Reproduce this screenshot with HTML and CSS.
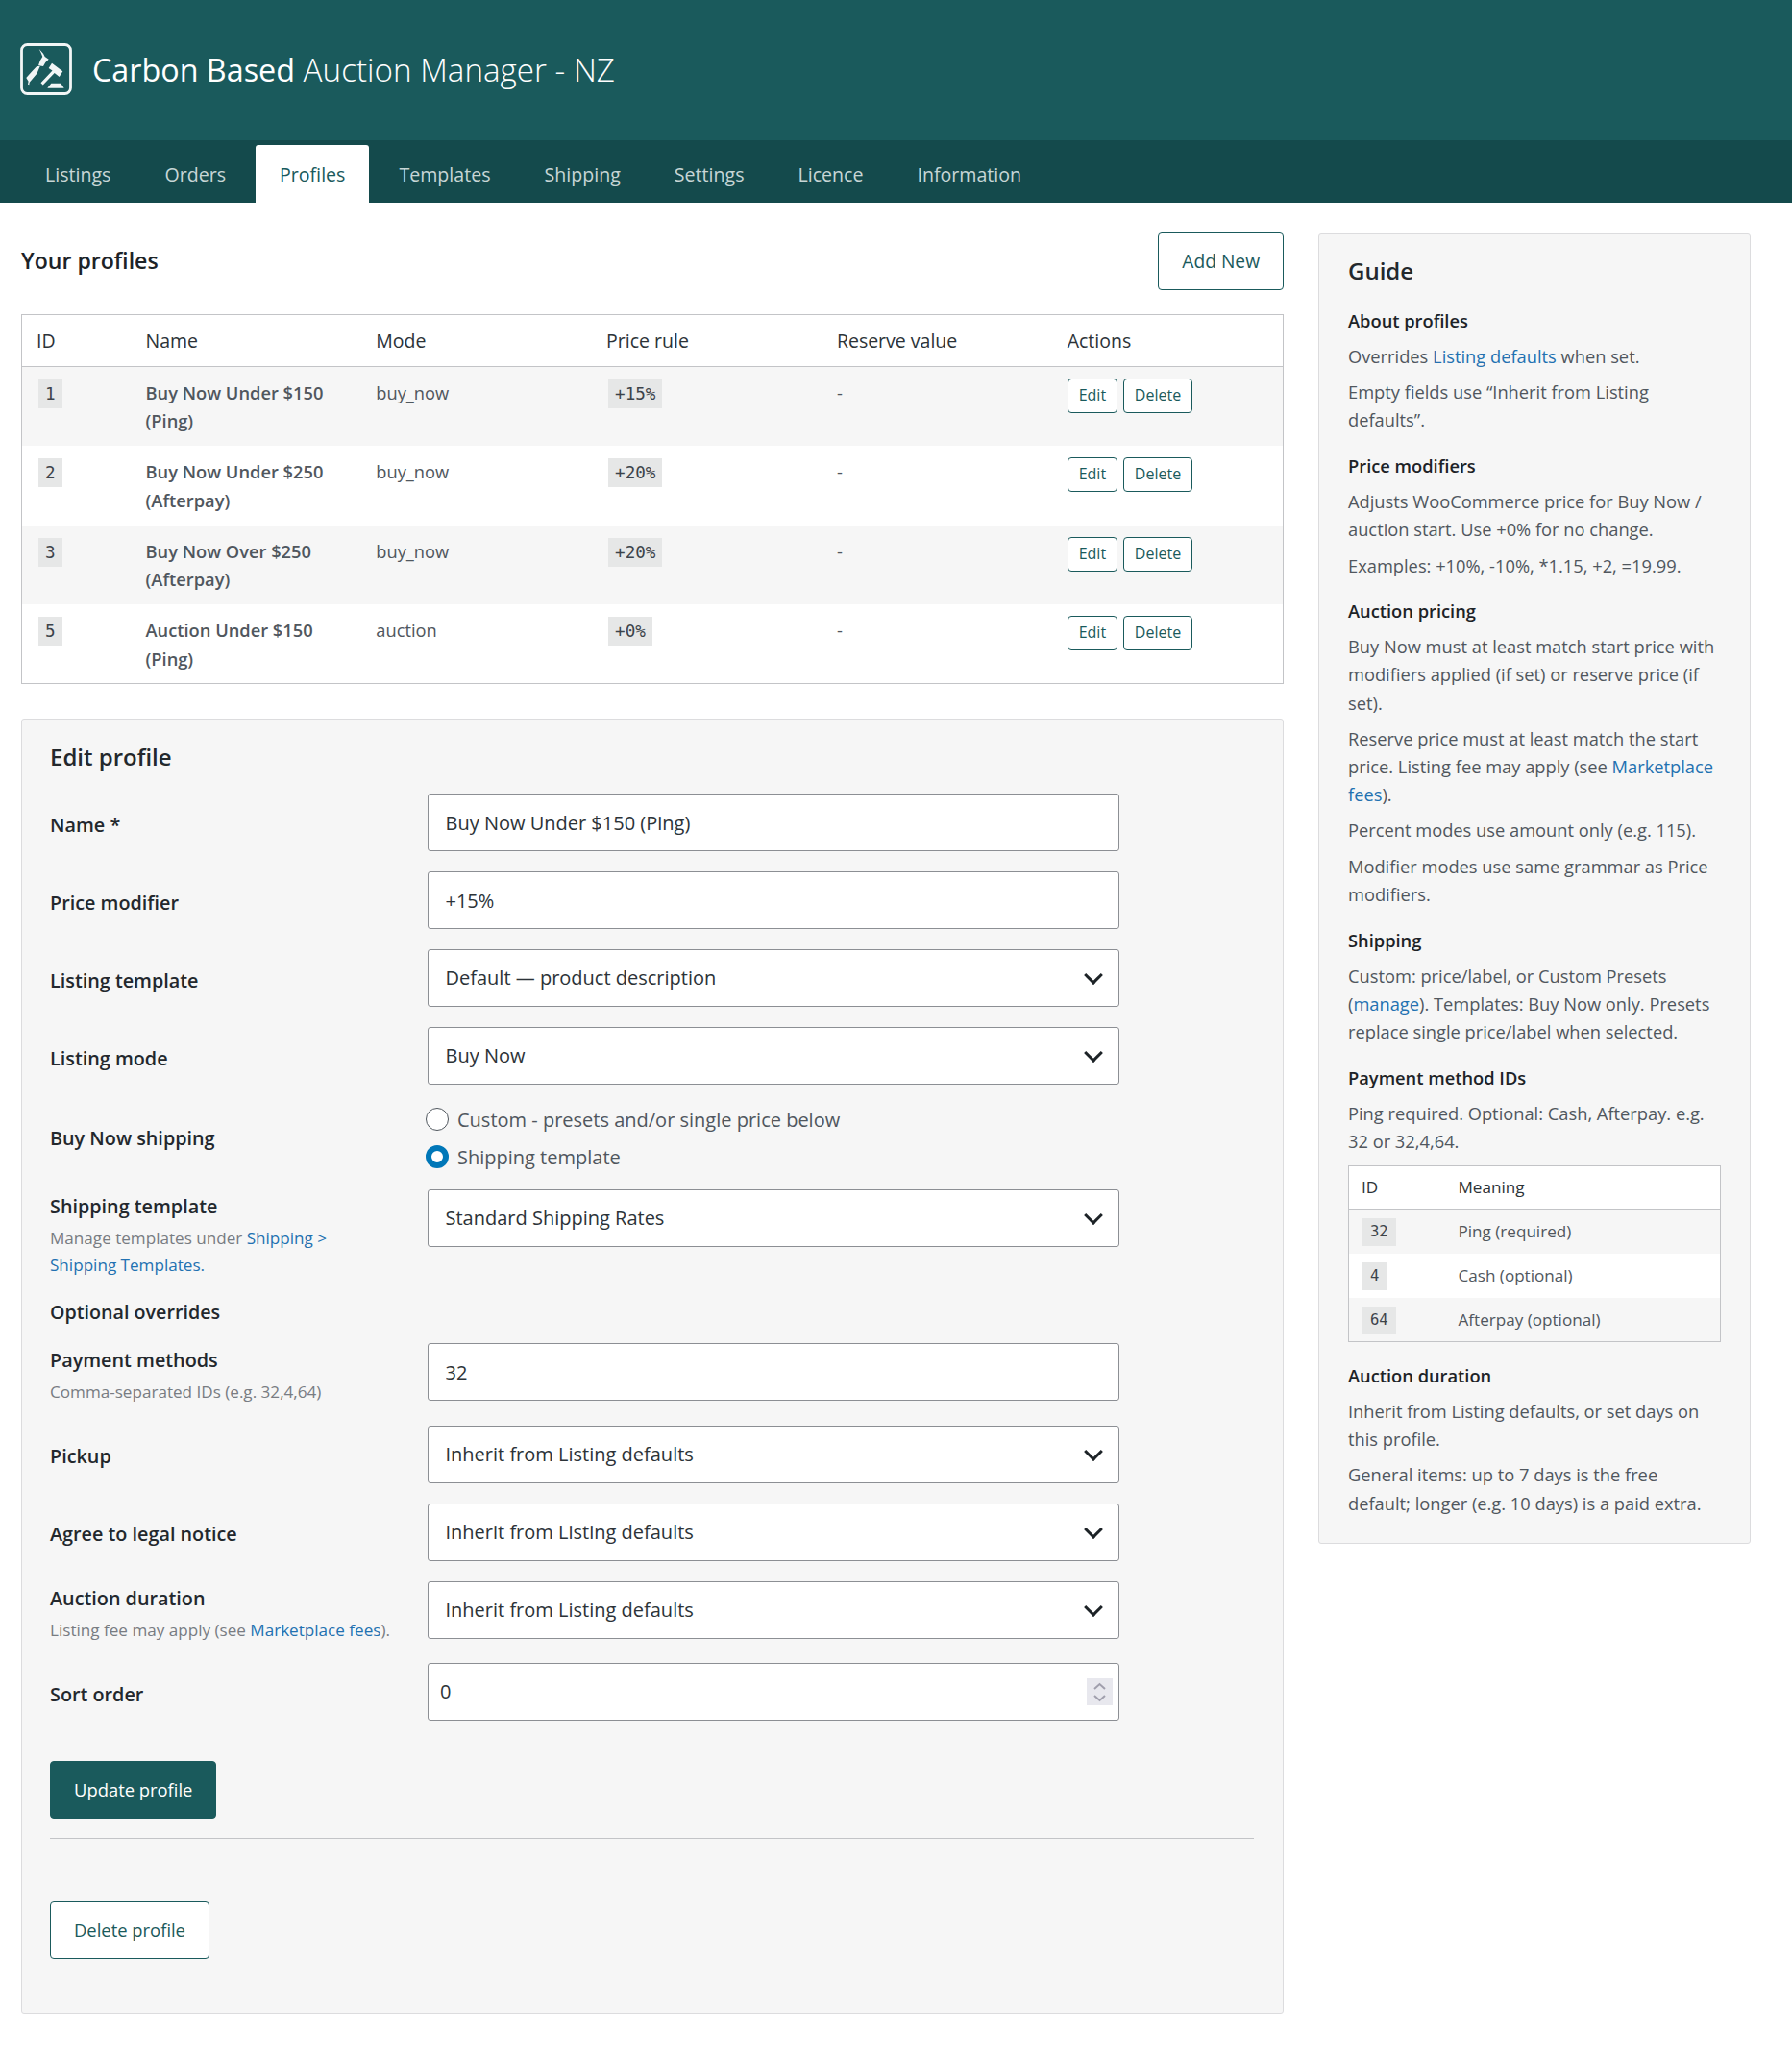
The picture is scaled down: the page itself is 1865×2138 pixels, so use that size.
FILE: index.html

```html
<!DOCTYPE html>
<html lang="en">
<head>
  <meta charset="UTF-8">
  <meta name="viewport" content="width=device-width, initial-scale=1.0">
  <title>Carbon Based Auction Manager - NZ</title>
  <link rel="stylesheet" href="styles.css">
</head>
<body>
  <header class="app-header">
    <svg class="logo" viewBox="0 0 56 56" aria-hidden="true">
      <rect x="2.500" y="2.500" width="51" height="51" rx="6" fill="none" stroke="#f2f6f6" stroke-width="2.800"/>
      <path d="M20.700 7l4.300 4.700 1.700 3.300 4 2.700-3.400 3.300-2.300 4-5-.7 1.700-5 2.600-4.300-1.600-4z" fill="#f2f6f6"/>
      <path d="M21.700 25l-3.400 7.700-7.600 9-.4 2.500-1.300-.4.600-3-2.300-3.800 6-6.700 5-5.300z" fill="#f2f6f6"/>
      <path d="M34 21.700l11.300 8.600-3.600 5.700-5-4-12 12.400-2.200-2.200 12-12.600-3.800-2.600z" fill="#f2f6f6"/>
      <path d="M33.300 42.700h10l3.400 5H29.300z" fill="#f2f6f6"/>
    </svg>
    <h1 class="app-title"><strong>Carbon Based</strong> Auction Manager - NZ</h1>
  </header>

  <nav class="tabs">
    <a href="#">Listings</a>
    <a href="#">Orders</a>
    <a href="#" class="active">Profiles</a>
    <a href="#">Templates</a>
    <a href="#">Shipping</a>
    <a href="#">Settings</a>
    <a href="#">Licence</a>
    <a href="#">Information</a>
  </nav>

  <div class="layout">
    <main class="main-col">
      <div class="list-head">
        <h2>Your profiles</h2>
        <a href="#" class="btn btn-add">Add New</a>
      </div>

      <table class="data-table profiles">
        <thead>
          <tr><th>ID</th><th>Name</th><th>Mode</th><th>Price rule</th><th>Reserve value</th><th>Actions</th></tr>
        </thead>
        <tbody>
          <tr>
            <td><code>1</code></td>
            <td class="name">Buy Now Under $150 (Ping)</td>
            <td>buy_now</td>
            <td><code>+15%</code></td>
            <td>-</td>
            <td><a href="#" class="btn-small">Edit</a> <a href="#" class="btn-small">Delete</a></td>
          </tr>
          <tr>
            <td><code>2</code></td>
            <td class="name">Buy Now Under $250 (Afterpay)</td>
            <td>buy_now</td>
            <td><code>+20%</code></td>
            <td>-</td>
            <td><a href="#" class="btn-small">Edit</a> <a href="#" class="btn-small">Delete</a></td>
          </tr>
          <tr>
            <td><code>3</code></td>
            <td class="name">Buy Now Over $250 (Afterpay)</td>
            <td>buy_now</td>
            <td><code>+20%</code></td>
            <td>-</td>
            <td><a href="#" class="btn-small">Edit</a> <a href="#" class="btn-small">Delete</a></td>
          </tr>
          <tr>
            <td><code>5</code></td>
            <td class="name">Auction Under $150 (Ping)</td>
            <td>auction</td>
            <td><code>+0%</code></td>
            <td>-</td>
            <td><a href="#" class="btn-small">Edit</a> <a href="#" class="btn-small">Delete</a></td>
          </tr>
        </tbody>
      </table>

      <form class="card edit-card">
        <h2>Edit profile</h2>

        <div class="field">
          <label>Name *</label>
          <input class="control" type="text" value="Buy Now Under $150 (Ping)">
        </div>
        <div class="field">
          <label>Price modifier</label>
          <input class="control" type="text" value="+15%">
        </div>
        <div class="field">
          <label>Listing template</label>
          <div class="control select">Default — product description</div>
        </div>
        <div class="field">
          <label>Listing mode</label>
          <div class="control select">Buy Now</div>
        </div>
        <div class="field radios-field">
          <label>Buy Now shipping</label>
          <div class="radios">
            <div class="radio-line"><span class="radio"></span>Custom - presets and/or single price below</div>
            <div class="radio-line"><span class="radio checked"></span>Shipping template</div>
          </div>
        </div>
        <div class="field top">
          <div>
            <label>Shipping template</label>
            <p class="help">Manage templates under <a href="#">Shipping &gt;<br>Shipping Templates.</a></p>
          </div>
          <div class="control select">Standard Shipping Rates</div>
        </div>

        <h3 class="sub-head">Optional overrides</h3>

        <div class="field top">
          <div>
            <label>Payment methods</label>
            <p class="help">Comma-separated IDs (e.g. 32,4,64)</p>
          </div>
          <input class="control" type="text" value="32">
        </div>
        <div class="field">
          <label>Pickup</label>
          <div class="control select">Inherit from Listing defaults</div>
        </div>
        <div class="field">
          <label>Agree to legal notice</label>
          <div class="control select">Inherit from Listing defaults</div>
        </div>
        <div class="field top">
          <div>
            <label>Auction duration</label>
            <p class="help">Listing fee may apply (see <a href="#">Marketplace fees</a>).</p>
          </div>
          <div class="control select">Inherit from Listing defaults</div>
        </div>
        <div class="field">
          <label>Sort order</label>
          <div class="control number">0
            <span class="spinner">
              <svg viewBox="0 0 27 28" width="27" height="28"><path d="M8 11l5.500-5 5.500 5M8 18l5.500 5 5.500-5" fill="none" stroke="#a09fad" stroke-width="2"/></svg>
            </span>
          </div>
        </div>

        <div class="form-actions">
          <a href="#" class="btn btn-primary">Update profile</a>
        </div>
        <div class="form-danger">
          <a href="#" class="btn">Delete profile</a>
        </div>
      </form>
    </main>

    <aside class="card guide">
      <h2>Guide</h2>

      <h4>About profiles</h4>
      <p>Overrides <a href="#">Listing defaults</a> when set.</p>
      <p>Empty fields use “Inherit from Listing defaults”.</p>

      <h4>Price modifiers</h4>
      <p>Adjusts WooCommerce price for Buy Now / auction start. Use +0% for no change.</p>
      <p>Examples: +10%, -10%, *1.15, +2, =19.99.</p>

      <h4>Auction pricing</h4>
      <p>Buy Now must at least match start price with modifiers applied (if set) or reserve price (if set).</p>
      <p>Reserve price must at least match the start price. Listing fee may apply (see <a href="#">Marketplace fees</a>).</p>
      <p>Percent modes use amount only (e.g. 115).</p>
      <p>Modifier modes use same grammar as Price modifiers.</p>

      <h4>Shipping</h4>
      <p>Custom: price/label, or Custom Presets (<a href="#">manage</a>). Templates: Buy Now only. Presets replace single price/label when selected.</p>

      <h4>Payment method IDs</h4>
      <p>Ping required. Optional: Cash, Afterpay. e.g. 32 or 32,4,64.</p>

      <table class="data-table ids">
        <thead><tr><th>ID</th><th>Meaning</th></tr></thead>
        <tbody>
          <tr><td><code>32</code></td><td>Ping (required)</td></tr>
          <tr><td><code>4</code></td><td>Cash (optional)</td></tr>
          <tr><td><code>64</code></td><td>Afterpay (optional)</td></tr>
        </tbody>
      </table>

      <h4>Auction duration</h4>
      <p>Inherit from Listing defaults, or set days on this profile.</p>
      <p>General items: up to 7 days is the free default; longer (e.g. 10 days) is a paid extra.</p>
    </aside>
  </div>
</body>
</html>
```

FILE: styles.css

```css
* {
  box-sizing: border-box;
}
body {
  margin: 0;
  background: #fff;
  color: #3c434a;
  font-family: "Open Sans", "Noto Sans", sans-serif;
  font-size: 18.3px;
  line-height: 29.4px;
}
a {
  color: #2271b1;
  text-decoration: none;
}

/* header + tabs */
.app-header {
  height: 146px;
  background: #1a5a5c;
  display: flex;
  align-items: center;
  padding-left: 20px;
  gap: 20px;
}
.logo {
  width: 56px;
  height: 56px;
  margin-top: -3px;
}
.app-title {
  margin: 0;
  color: #fff;
  font-size: 33.200px;
  font-weight: 300;
  line-height: 1;
}
.app-title strong {
  font-size: 32.300px;
  font-weight: 500;
}
.tabs {
  height: 65px;
  background: #144a4c;
  display: flex;
  align-items: flex-end;
  padding-left: 22px;
}
.tabs a {
  height: 60px;
  padding: 0 25px;
  margin-right: 6px;
  line-height: 62px;
  font-size: 19.6px;
  color: #c7d6d6;
  border-radius: 3px 3px 0 0;
}
.tabs a.active {
  background: #fff;
  color: #1a5a5c;
}

/* page columns */
.layout {
  display: grid;
  grid-template-columns: 1314px 450px;
  gap: 36px;
  padding: 31px 0 0 22px;
}
.main-col {
  min-width: 0;
}
.list-head {
  display: flex;
  justify-content: space-between;
  align-items: center;
  height: 60px;
  margin-bottom: 25px;
}
.list-head h2 {
  margin: 0;
  font-size: 23.100px;
  font-weight: 600;
  color: #1d2327;
}

/* buttons */
.btn {
  display: inline-block;
  height: 60px;
  line-height: 57px;
  padding: 0 24px;
  font-size: 18.4px;
  color: #1a5a5c;
  background: #fff;
  border: 1.5px solid #1a5a5c;
  border-radius: 4px;
}
.btn-add {
  font-size: 19.2px;
}
.btn-primary {
  background: #1a5a5c;
  color: #fff;
}
.btn-small {
  display: inline-block;
  height: 36px;
  line-height: 33px;
  padding: 0 11px;
  font-size: 16px;
  color: #1a5a5c;
  background: #fff;
  border: 1.5px solid #1a5a5c;
  border-radius: 4px;
  margin-right: 1px;
}

/* tables */
.data-table {
  width: 100%;
  border-collapse: collapse;
  table-layout: fixed;
  background: #fff;
  border: 1.5px solid #c3c4c7;
}
.data-table th {
  text-align: left;
  font-weight: 400;
  color: #2c3338;
  border-bottom: 1.5px solid #c3c4c7;
}
.data-table tbody tr:nth-child(odd) {
  background: #f6f6f6;
}
.data-table td {
  vertical-align: top;
  color: #50575e;
}
code {
  display: inline-block;
  background: #e6e7e7;
  color: #3c434a;
  font-family: "DejaVu Sans Mono", "Liberation Mono", monospace;
  font-size: 17.6px;
  line-height: 30px;
  padding: 0 7px;
  margin-left: 2px;
}
.profiles th {
  height: 54px;
  padding: 0 15px;
  font-size: 19.5px;
}
.profiles th:first-child {
  width: 114px;
}
.profiles td {
  height: 82.600px;
  padding: 12px 15px 0;
}
.profiles td.name {
  font-weight: 600;
  padding-right: 30px;
}
.ids {
  margin: 11px 0 20px;
}
.ids th {
  height: 45px;
  padding: 0 13px;
  font-size: 17.1px;
}
.ids th:first-child {
  width: 101px;
}
.ids td {
  height: 46px;
  padding: 0 13px;
  font-size: 17.1px;
  vertical-align: middle;
}
.ids code {
  font-size: 15.500px;
  line-height: 29px;
  padding: 0 8px;
  margin-left: 1px;
}

/* cards */
.card {
  background: #f6f6f6;
  border: 1.5px solid #dcdcde;
  border-radius: 3px;
}
.edit-card {
  margin-top: 36px;
  padding: 0 30px 0 29px;
  height: 1348px;
}
.edit-card h2 {
  margin: 0;
  padding-top: 22px;
  height: 77px;
  font-size: 24px;
  line-height: 33px;
  font-weight: 600;
  color: #23282d;
}

/* form rows */
.field {
  display: grid;
  grid-template-columns: 393px 720px;
  align-items: center;
  margin-bottom: 21px;
}
.field label {
  display: block;
  padding-top: 5px;
  font-size: 19.8px;
  font-weight: 600;
  line-height: 30px;
  color: #23282d;
}
.field.top {
  align-items: start;
}
.field.top label {
  padding-top: 3px;
}
.help {
  margin: 4px 0 0;
  font-size: 17.1px;
  line-height: 27.5px;
  color: #787c82;
}
.control {
  display: block;
  height: 60px;
  width: 720px;
  padding: 0 17.5px;
  border: 1.5px solid #8c8f94;
  border-radius: 3px;
  background: #fff;
  color: #2c3338;
  font: inherit;
  font-size: 20px;
  line-height: 57px;
  position: relative;
}
.select::after {
  content: "";
  position: absolute;
  right: 19px;
  top: 19px;
  width: 11px;
  height: 11px;
  border-right: 3px solid #1d2327;
  border-bottom: 3px solid #1d2327;
  transform: rotate(45deg);
}
.number {
  padding-left: 12px;
}
.spinner {
  position: absolute;
  right: 6px;
  top: 15px;
  width: 27px;
  height: 28px;
  background: #e8e8ee;
  line-height: 0;
}
.radios-field {
  margin-bottom: 19px;
}
.radios-field label {
  padding-top: 1px;
}
.radio-line {
  display: flex;
  align-items: center;
  gap: 9px;
  height: 30px;
  margin-bottom: 9px;
  font-size: 20px;
  color: #50575e;
}
.radio-line:last-child {
  margin-bottom: 0;
}
.radio {
  width: 24px;
  height: 24px;
  margin-left: -2px;
  border-radius: 50%;
  border: 1.5px solid #50575e;
  background: #fff;
}
.radio.checked {
  border: 6px solid #0077b8;
}
.sub-head {
  margin: 20px 0 17px;
  font-size: 19.7px;
  font-weight: 600;
  line-height: 30px;
  color: #23282d;
}
.form-actions {
  margin-top: 42px;
  padding-bottom: 20px;
  border-bottom: 1.5px solid #c3c4c7;
}
.form-danger {
  margin-top: 65px;
}

/* guide */
.guide {
  width: 450px;
  height: 1364px;
  margin-top: 1px;
  padding: 21px 30px 0;
}
.guide h2 {
  margin: 0 0 21px;
  font-size: 24px;
  line-height: 33px;
  font-weight: 600;
  color: #23282d;
}
.guide h4 {
  margin: 0 0 8px;
  font-size: 18.3px;
  line-height: 29px;
  font-weight: 600;
  color: #1d2327;
}
.guide p {
  margin: 0 0 8px;
  line-height: 29.2px;
  color: #50575e;
}
.guide p + h4 {
  margin-top: 18.5px;
}
```
